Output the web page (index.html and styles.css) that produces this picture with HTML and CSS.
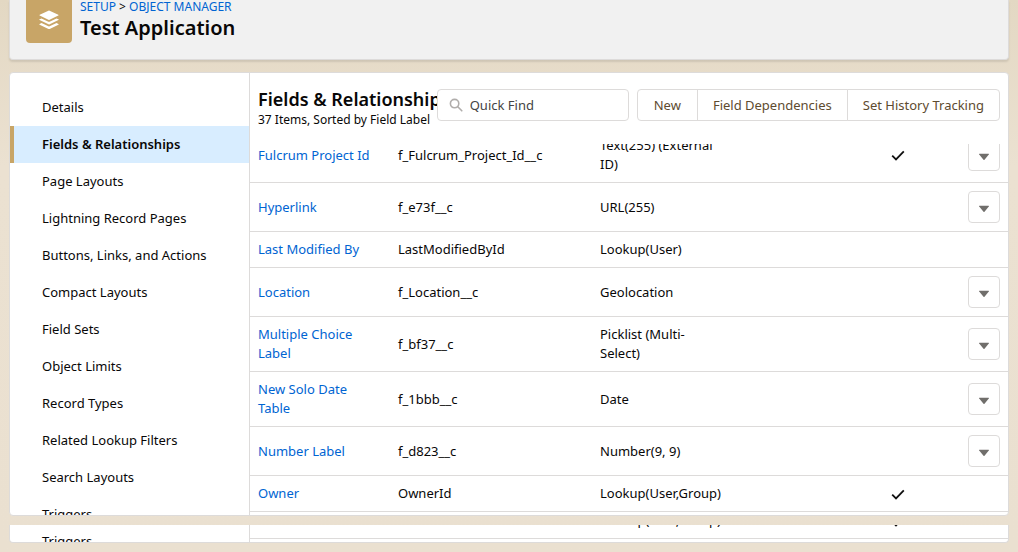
FILE: index.html
```
<!DOCTYPE html>
<html lang="en">
<head>
<meta charset="utf-8">
<title>Test Application</title>
<link rel="stylesheet" href="styles.css">
</head>
<body>
<svg class="symbols" aria-hidden="true">
  <symbol id="check" viewBox="0 0 14 14"><path d="M1.2 7.6 5 11.4 12.8 3.4" fill="none" stroke="#111" stroke-width="1.8"/></symbol>
  <symbol id="down" viewBox="0 0 12 8"><path d="M1.4.8h9.2q.6.2.2.8L6.5 6.8q-.5.5-1 0L1.2 1.6Q.8 1 1.4.8Z" fill="#706e6b"/></symbol>
</svg>
<header class="page-header">
  <div class="app-icon">
    <svg viewBox="0 0 20 20" width="20" height="20" fill="#fff" aria-hidden="true">
      <path d="M9.4.7q.6-.3 1.2 0l8.7 4q.7.4 0 .9l-8.7 4.2q-.6.3-1.2 0L.7 5.6q-.7-.5 0-.9Z"/>
      <path d="M.6 9.3 2.5 8.400l6.900 3.300q.6.3 1.200 0l6.900-3.300 1.900.9q.7.4 0 .8l-8.700 4.200q-.6.3-1.200 0L.6 10.100q-.7-.4 0-.8Z"/>
      <path d="M.6 13.900 2.500 13l6.900 3.300q.6.3 1.200 0l6.900-3.300 1.900.9q.7.4 0 .8l-8.700 4.200q-.6.3-1.200 0L.6 14.700q-.7-.4 0-.8Z"/>
    </svg>
  </div>
  <div>
    <nav class="crumbs" aria-label="Breadcrumb"><a href="#">SETUP</a> <span>&gt;</span> <a href="#">OBJECT MANAGER</a></nav>
    <h1>Test Application</h1>
  </div>
</header>

<main class="panel">
  <nav class="side" aria-label="Object settings">
    <a href="#">Details</a>
    <a href="#" class="active" aria-current="page">Fields &amp; Relationships</a>
    <a href="#">Page Layouts</a>
    <a href="#">Lightning Record Pages</a>
    <a href="#">Buttons, Links, and Actions</a>
    <a href="#">Compact Layouts</a>
    <a href="#">Field Sets</a>
    <a href="#">Object Limits</a>
    <a href="#">Record Types</a>
    <a href="#">Related Lookup Filters</a>
    <a href="#">Search Layouts</a>
    <a href="#">Triggers</a>
  </nav>
  <section class="content">
    <div class="toolbar">
      <div class="heading">
        <h2>Fields &amp; Relationships</h2>
        <p>37 Items, Sorted by Field Label</p>
      </div>
      <label class="search">
        <svg viewBox="0 0 14 14" width="14" height="14" fill="none" stroke="#b0adab" stroke-width="1.6" aria-hidden="true"><circle cx="5.600" cy="5.600" r="4.200"/><path d="m8.800 8.800 4 4" stroke-linecap="round"/></svg>
        <input type="search" placeholder="Quick Find" aria-label="Quick Find">
      </label>
      <div class="actions">
        <button type="button">New</button>
        <button type="button">Field Dependencies</button>
        <button type="button">Set History Tracking</button>
      </div>
    </div>
    <div class="rows">
      <table class="fields scrolled">
        <colgroup><col class="c-label"><col class="c-name"><col class="c-type"><col><col class="c-index"><col class="c-menu"></colgroup>
        <tbody>
        <tr><td><a href="#">Fulcrum Project Id</a></td><td>f_Fulcrum_Project_Id__c</td><td>Text(255) (External ID)</td><td></td><td><svg class="check"><use href="#check"/></svg></td><td><button type="button" aria-label="Show actions"><svg class="down"><use href="#down"/></svg></button></td></tr>
        <tr><td><a href="#">Hyperlink</a></td><td>f_e73f__c</td><td>URL(255)</td><td></td><td></td><td><button type="button" aria-label="Show actions"><svg class="down"><use href="#down"/></svg></button></td></tr>
        <tr><td><a href="#">Last Modified By</a></td><td>LastModifiedById</td><td>Lookup(User)</td><td></td><td></td><td></td></tr>
        <tr><td><a href="#">Location</a></td><td>f_Location__c</td><td>Geolocation</td><td></td><td></td><td><button type="button" aria-label="Show actions"><svg class="down"><use href="#down"/></svg></button></td></tr>
        <tr><td><a href="#">Multiple Choice Label</a></td><td>f_bf37__c</td><td>Picklist (Multi-Select)</td><td></td><td></td><td><button type="button" aria-label="Show actions"><svg class="down"><use href="#down"/></svg></button></td></tr>
        <tr><td><a href="#">New Solo Date Table</a></td><td>f_1bbb__c</td><td>Date</td><td></td><td></td><td><button type="button" aria-label="Show actions"><svg class="down"><use href="#down"/></svg></button></td></tr>
        <tr><td><a href="#">Number Label</a></td><td>f_d823__c</td><td>Number(9, 9)</td><td></td><td></td><td><button type="button" aria-label="Show actions"><svg class="down"><use href="#down"/></svg></button></td></tr>
        <tr><td><a href="#">Owner</a></td><td>OwnerId</td><td>Lookup(User,Group)</td><td></td><td><svg class="check"><use href="#check"/></svg></td><td></td></tr>
        </tbody>
      </table>
    </div>
  </section>
</main>

<div class="panel tail">
  <nav class="side" aria-label="More settings"><a href="#">Triggers</a></nav>
  <section class="content">
    <div class="rows">
      <table class="fields scrolled">
        <colgroup><col class="c-label"><col class="c-name"><col class="c-type"><col><col class="c-index"><col class="c-menu"></colgroup>
        <tbody>
        <tr><td><a href="#">Owner</a></td><td>OwnerId</td><td>Lookup(User,Group)</td><td></td><td><svg class="check"><use href="#check"/></svg></td><td></td></tr>
        </tbody>
      </table>
    </div>
  </section>
</div>
</body>
</html>
```
FILE: styles.css
```
* { box-sizing: border-box; }
body {
  margin: 0;
  padding: 0 9px 9px;
  height: 100vh;
  overflow: hidden;
  display: flex;
  flex-direction: column;
  background: linear-gradient(#e3d8c3, #ebe1d1 30%, #eae0d0);
  color: #080707;
  font: 13px/19px "Noto Sans", "Open Sans", sans-serif;
}
a { color: #0064d2; text-decoration: none; }
h1, h2, p { margin: 0; }
button, input { font: inherit; }
.symbols { display: none; }

.page-header {
  flex: none;
  display: flex;
  gap: 8px;
  padding: 0 16px 16px;
  background: #f1f1f1;
  border: 1px solid #dddbda;
  border-top: 0;
  border-radius: 0 0 4px 4px;
  box-shadow: 0 2px 2px rgba(0, 0, 0, .1);
}
.app-icon {
  width: 46px;
  height: 43px;
  padding-bottom: 4px;
  display: grid;
  place-items: center;
  background: #c8a567;
  border-radius: 0 0 4px 4px;
}
.crumbs { font-size: 12px; line-height: 14px; }
h1 { font-size: 20px; line-height: 28px; font-weight: 600; }

.panel {
  flex: 1;
  min-height: 0;
  margin-top: 12px;
  display: grid;
  grid-template-columns: 240px minmax(0, 1fr);
  grid-template-rows: minmax(0, 1fr);
  overflow: hidden;
  background: #fff;
  border: 1px solid #dddbda;
  border-radius: 4px;
}
.side { padding-top: 16px; border-right: 1px solid #dddbda; overflow: hidden; }
.side a {
  display: block;
  padding: 9px 32px;
  color: inherit;
}
.side .active {
  font-weight: 600;
  background: #d8edff;
  box-shadow: inset 4px 0 #c8a567;
}
.content { display: flex; flex-direction: column; min-height: 0; }
.toolbar { flex: none; display: flex; align-items: flex-start; padding: 16px 8px 13px; }
.heading { flex: 1; min-width: 0; overflow: hidden; white-space: nowrap; }
h2 { font-size: 18px; line-height: 20px; font-weight: 600; }
.heading p { font-size: 12px; line-height: 22px; }
.search {
  width: 192px;
  height: 32px;
  display: flex;
  align-items: center;
  gap: 7px;
  padding: 0 11px;
  border: 1px solid #dddbda;
  border-radius: 4px;
  background: #fff;
}
.search svg { flex: none; }
.search input {
  width: 100%;
  min-width: 0;
  padding: 0;
  border: 0;
  outline: 0;
  background: none;
}
.search input::placeholder { color: #444; opacity: 1; }
.actions { flex: none; display: flex; margin-left: 8px; }
.actions button {
  height: 32px;
  padding: 0 15px;
  border: 1px solid #dddbda;
  background: #fff;
  color: #5e4b30;
}
.actions button + button { margin-left: -1px; }
.actions button:first-child { padding: 0 16px; border-radius: 4px 0 0 4px; }
.actions button:last-child { border-radius: 0 4px 4px 0; }

.rows { flex: 1; min-height: 0; overflow: hidden; }
.fields { width: 100%; table-layout: fixed; border-collapse: separate; border-spacing: 0; }
.scrolled { margin-top: -16px; }
.c-label { width: 140px; }
.c-name { width: 202px; }
.c-type { width: 140px; }
.c-index { width: 125px; }
.c-menu { width: 48px; }
.fields td { padding: 8px; border-bottom: 1px solid #dddbda; vertical-align: middle; }
.fields td:nth-child(5) { text-align: center; }
.fields td button {
  display: grid;
  place-items: center;
  width: 32px;
  height: 32px;
  padding: 4px 0 0;
  background: #fff;
  border: 1px solid #dddbda;
  border-radius: 4px;
}
.check { display: block; width: 14px; height: 14px; margin: 0 auto; }
.down { width: 12px; height: 8px; }

.tail {
  flex: none;
  height: 18px;
  margin-top: 9px;
  border-top: 0;
  border-radius: 0 0 4px 4px;
}
.tail .side { padding: 0; }
.tail .side a { margin-top: -2px; }
.tail .scrolled { margin-top: -22px; }
```
